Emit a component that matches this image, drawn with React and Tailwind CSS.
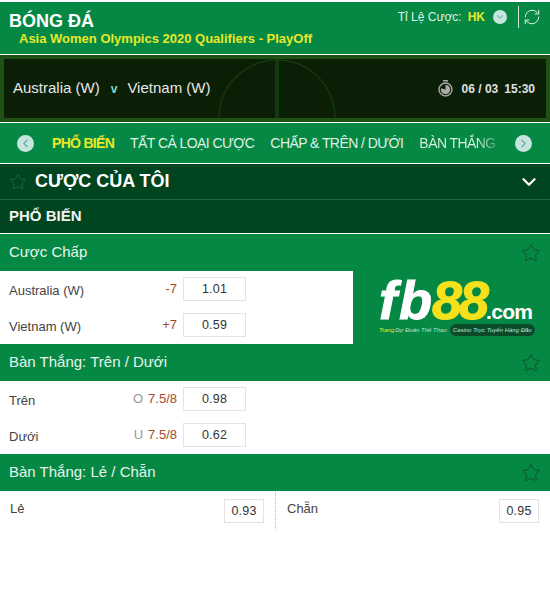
import { ChevronLeft, ChevronRight, ChevronDown, RefreshCw, Star } from 'lucide-react';

function SectionHeader({ title }) {
  return (
    <div className="flex h-[37px] items-center justify-between bg-[#068845] pl-[9px] pr-[9px]">
      <span className="text-[15px] text-[#e6f5ea]">{title}</span>
      <Star size={20} strokeWidth={1} className="text-[#0b4a27]" />
    </div>
  );
}

function Row({ name, prefix, line, odds }) {
  return (
    <div className="flex h-[36px] w-[237px] items-center">
      <span className="pt-[3px] text-[13px] text-[#444]">{name}</span>
      <span className="ml-auto mr-[6px] text-[13px] text-[#a5492c]">
        {prefix && <span className="mr-[5px] text-[#999]">{prefix}</span>}
        {line}
      </span>
      <div className="flex h-[24px] w-[63px] items-center justify-center border border-[#e3e3e3] text-[12.5px] tracking-[0.2px] text-[#333]">
        {odds}
      </div>
    </div>
  );
}

function Circle({ icon: Icon }) {
  return (
    <div className="flex h-[17px] w-[17px] items-center justify-center rounded-full bg-[#c4e6df] text-[#6fae9d]">
      <Icon size={13} strokeWidth={2.5} />
    </div>
  );
}

export default function App() {
  return (
    <div className="h-[592px] w-[550px] overflow-hidden bg-white font-['Liberation_Sans',Arial,sans-serif]">
      <div className="h-[2px] bg-white" />

      {/* top bar */}
      <div className="flex h-[52px] justify-between bg-[#068845] pl-[9px] pr-[9px]">
        <div>
          <div className="pt-[9px] text-[18px] font-bold leading-[20px] text-white">BÓNG ĐÁ</div>
          <div className="pl-[10px] text-[13px] font-bold leading-[16px] text-[#e6e82a]">
            Asia Women Olympics 2020 Qualifiers - PlayOff
          </div>
        </div>
        <div className="flex h-[22px] items-center pt-[7px]">
          <span className="text-[12px] text-[#dff2e6]">Tỉ Lệ Cược:</span>
          <span className="ml-[6px] text-[12px] font-bold text-[#e6e82a]">HK</span>
          <div className="ml-[8px] flex h-[14px] w-[14px] items-center justify-center rounded-full bg-[#c4e6df] text-[#6fae9d]">
            <ChevronDown size={10} strokeWidth={2.5} />
          </div>
          <div className="ml-[11px] h-[22px] w-px bg-[#cfe8d8]" />
          <RefreshCw size={18} strokeWidth={1.25} className="ml-[4px] text-[#e6f5ea]" />
        </div>
      </div>

      {/* match */}
      <div className="border-y border-white bg-[#1f5014] p-[4px]">
        <div className="relative flex h-[59px] items-center justify-between overflow-hidden bg-[#0a1f06] pl-[9px] pr-[11px]">
          <svg className="absolute left-[203px] top-0 h-[59px] w-[140px]" viewBox="0 0 140 59" fill="none">
            <circle cx="70" cy="59" r="58" stroke="#133a0c" strokeWidth="1.5" />
            <path d="M70 0V59" stroke="#123a0b" strokeWidth="4" />
          </svg>
          <div className="relative flex items-center text-[15px] text-[#e8e8e8]">
            <span>Australia (W)</span>
            <span className="ml-[11px] mr-[10px] text-[12px] font-bold text-[#7fd6c8]">v</span>
            <span>Vietnam (W)</span>
          </div>
          <div className="relative flex items-center text-[12px] font-bold text-[#e0e0e0]">
            <svg width="15" height="17" viewBox="0 0 15 17" className="mr-[9px]">
              <rect x="5" y="0" width="5" height="1.5" fill="#aaa" />
              <circle cx="7.5" cy="9.5" r="6.5" fill="none" stroke="#aaa" strokeWidth="1.4" />
              <path d="M7.5 9.5V4.8A4.7 4.7 0 1 1 3 8.2Z" fill="#aaa" />
            </svg>
            <span>06 / 03</span>
            <span className="ml-[6px]">15:30</span>
          </div>
        </div>
      </div>

      {/* tabs */}
      <div className="flex h-[41px] items-center justify-between border-b border-white bg-[#068845] pl-[17px] pr-[18px] text-[14px]">
        <Circle icon={ChevronLeft} />
        <div className="ml-[18px] flex flex-1 gap-[16px] pt-[1px] tracking-[-0.57px] text-[#dff2e6]">
          <span className="font-bold tracking-[-0.7px] text-[#e6e82a]">PHỔ BIẾN</span>
          <span>TẤT CẢ LOẠI CƯỢC</span>
          <span>CHẤP &amp; TRÊN / DƯỚI</span>
          <span className="bg-gradient-to-r from-[#dff2e6] from-75% to-[#3fa874] bg-clip-text whitespace-nowrap text-transparent">BÀN THẮNG</span>
        </div>
        <Circle icon={ChevronRight} />
      </div>

      {/* my bets */}
      <div className="flex h-[36px] items-center justify-between border-b border-[#1a6b3d] bg-[#004420] pl-[9px] pr-[10px]">
        <div className="flex items-center">
          <Star size={18} strokeWidth={1} className="text-[#1c7a45]" />
          <span className="ml-[8px] text-[18px] font-bold text-white">CƯỢC CỦA TÔI</span>
        </div>
        <ChevronDown size={22} strokeWidth={2.5} className="text-white" />
      </div>

      <div className="flex h-[34px] items-center border-b border-white bg-[#004420] pl-[9px] text-[15px] font-bold text-[#f2f2f2]">
        PHỔ BIẾN
      </div>

      <SectionHeader title="Cược Chấp" />
      <div className="relative h-[73px] bg-white pl-[9px]">
        <Row name="Australia (W)" line="-7" odds="1.01" />
        <Row name="Vietnam (W)" line="+7" odds="0.59" />
        <div className="absolute right-0 top-0 h-[73px] w-[197px] bg-[#068845] pl-[26px] pt-[7px]">
          <div className="flex h-[44px] items-baseline font-bold italic leading-[44px]">
            <span className="text-[54px] tracking-[2px] text-white [-webkit-text-stroke:1px_white]">fb</span>
            <span className="-ml-[2px] text-[54px] tracking-[-3px] text-[#f5e11c] [-webkit-text-stroke:1px_#f5e11c]">88</span>
            <span className="text-[21px] not-italic tracking-[-0.7px] text-white">.com</span>
          </div>
          <div className="mt-[2px] flex items-center text-[6px] italic leading-[12px] text-[#bfe5c9]">
            <span className="text-[#e6e82a]">Trang</span>
            <span className="ml-[1px]">Dự Đoán Thể Thao</span>
            <span className="ml-[3px] rounded-full bg-[#0c4a2a] px-[3px]">Casino Trực Tuyến Hàng Đầu</span>
          </div>
        </div>
      </div>

      <SectionHeader title="Bàn Thắng: Trên / Dưới" />
      <div className="h-[73px] bg-white pl-[9px]">
        <Row name="Trên" prefix="O" line="7.5/8" odds="0.98" />
        <Row name="Dưới" prefix="U" line="7.5/8" odds="0.62" />
      </div>

      <SectionHeader title="Bàn Thắng: Lẻ / Chẵn" />
      <div className="flex h-[39px] bg-white">
        <div className="flex h-full w-[276px] justify-between border-r border-dotted border-[#bbb] pl-[10px] pr-[11px] pt-[8px]">
          <span className="text-[13px] leading-[20px] text-[#444]">Lẻ</span>
          <div className="flex h-[24px] w-[40px] items-center justify-center border border-[#e3e3e3] text-[12.5px] tracking-[0.2px] text-[#333]">0.93</div>
        </div>
        <div className="flex h-full flex-1 justify-between pl-[11px] pr-[11px] pt-[8px]">
          <span className="text-[13px] leading-[20px] text-[#444]">Chẵn</span>
          <div className="flex h-[24px] w-[40px] items-center justify-center border border-[#e3e3e3] text-[12.5px] tracking-[0.2px] text-[#333]">0.95</div>
        </div>
      </div>
    </div>
  );
}
